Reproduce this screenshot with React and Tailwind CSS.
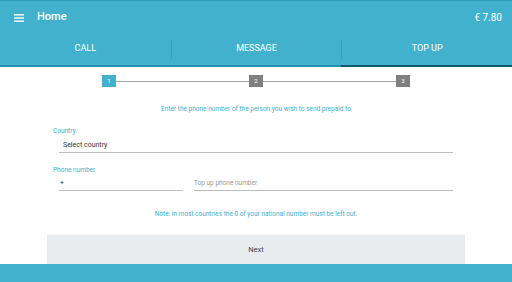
const tabs = ["CALL", "MESSAGE", "TOP UP"];

const Step = ({ n, active }) => (
    <div
        className={`w-[14px] h-[12px] flex items-center justify-center text-[6px] leading-none text-white ${active ? "bg-[#42b1cd]" : "bg-[#808080]"}`}
    >
        {n}
    </div>
);

export default function App() {
    return (
        <div className="w-[512px] h-[282px] flex flex-col overflow-hidden bg-white font-['Roboto',sans-serif]">
            <div className="bg-[#42b1cd] text-white">
                <div className="h-px bg-[#2f9ab4]" />
                <div className="h-[35px] flex items-center px-[14px] pb-[2px]">
                    <svg width="10" height="8" viewBox="0 0 10 8" className="mr-[13px]">
                        <rect x="0" y="0" width="10" height="1.6" fill="#e6f5f9" />
                        <rect x="0" y="3.2" width="10" height="1.6" fill="#e6f5f9" />
                        <rect x="0" y="6.4" width="10" height="1.6" fill="#e6f5f9" />
                    </svg>
                    <span className="text-[11px] font-medium">Home</span>
                    <span className="ml-auto mr-[-4px] text-[10px]">€ 7.80</span>
                </div>
                <div className="h-[29px] flex items-center pb-[3px]">
                    {tabs.map((t, i) => (
                        <div key={t} className="flex-1 flex items-center">
                            {i > 0 && <div className="w-px h-[19px] bg-[#3a9fb9]" />}
                            <div className="flex-1 text-center text-[9px]">{t}</div>
                        </div>
                    ))}
                </div>
                <div className="flex h-[2px]">
                    <div className="w-[341px] bg-[#1f93b0]" />
                    <div className="flex-1 bg-[#12596c]" />
                </div>
            </div>

            <div className="flex-1 flex flex-col overflow-hidden">
                <div className="mt-[8px] ml-[102px] w-[308px] flex items-center">
                    <Step n="1" active />
                    <div className="flex-1 h-px bg-[#ababab]" />
                    <Step n="2" />
                    <div className="flex-1 h-px bg-[#ababab]" />
                    <Step n="3" />
                </div>

                <p className="mt-[18px] text-center text-[6.5px] leading-[8px] text-[#42b1cd]">
                    Enter the phone number of the person you wish to send prepaid to
                </p>

                <div className="ml-[53px] w-[400px] mt-[14px]">
                    <div className="text-[6.5px] leading-[8px] text-[#42b1cd]">Country</div>
                    <div className="ml-[6px] mt-[1px] h-[17px] flex items-center pt-[3px] pl-[4px] border-b border-[#bdbdbd] text-[7px] text-[#333]">
                        Select country
                    </div>

                    <div className="mt-[13px] text-[6.5px] leading-[8px] text-[#42b1cd]">Phone number</div>
                    <div className="flex gap-[11px] pl-[6px]">
                        <div className="w-[124px] h-[17px] flex items-center pt-[3px] pl-[1px] border-b border-[#bdbdbd] text-[7px] text-[#333]">
                            +
                        </div>
                        <div className="flex-1 h-[17px] flex items-center pt-[3px] border-b border-[#bdbdbd] text-[6.5px] text-[#9a9a9a]">
                            Top up phone number
                        </div>
                    </div>
                </div>

                <p className="mt-[18px] text-center text-[6.5px] leading-[10px] text-[#42b1cd]">
                    Note: in most countries the 0 of your national number must be left out.
                </p>

                <button className="mt-[16px] ml-[47px] w-[418px] h-[29px] shrink-0 bg-[#e9ecef] text-[7.5px] text-[#444] flex items-center justify-center">
                    Next
                </button>
            </div>

            <div className="h-[18px] bg-[#42b1cd]" />
        </div>
    );
}
